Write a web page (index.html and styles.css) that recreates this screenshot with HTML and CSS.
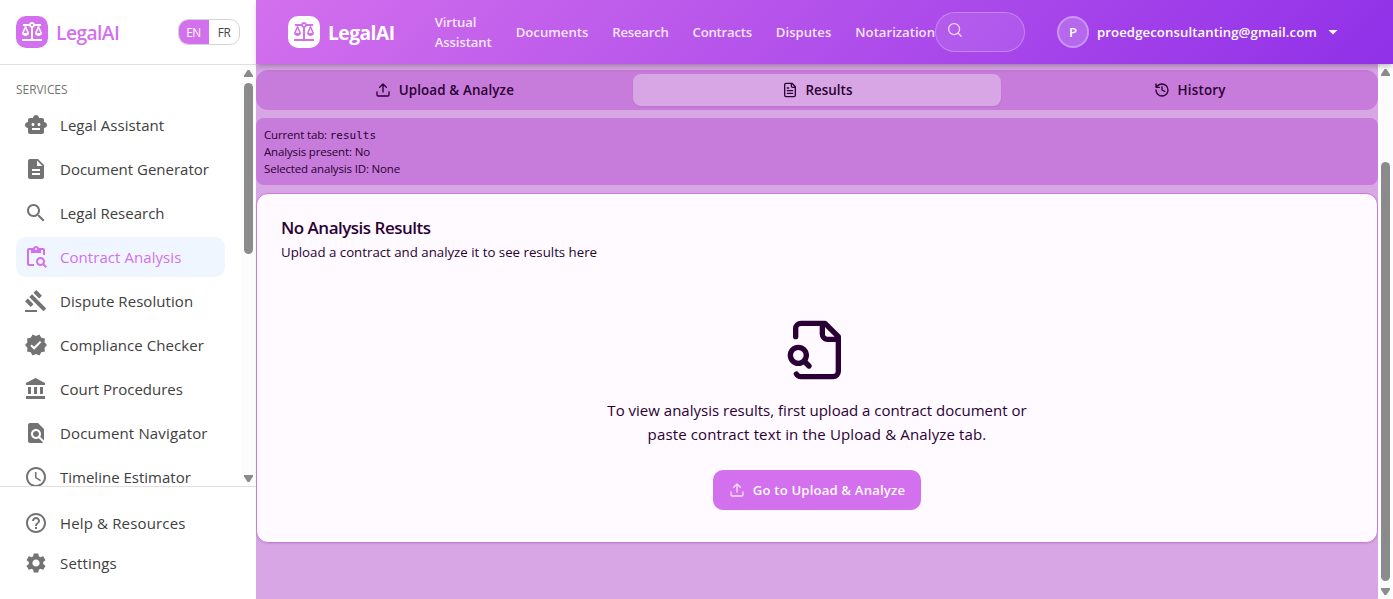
FILE: index.html
```
<!DOCTYPE html>
<html lang="en">
<head>
<meta charset="utf-8">
<title>LegalAI - Contract Analysis</title>
<link rel="stylesheet" href="styles.css">
</head>
<body>
<svg class="defs" width="0" height="0">
  <symbol id="balance" viewBox="0 0 24 24"><path d="M13 7.83c.85-.3 1.53-.98 1.83-1.83H18l-3 7c0 1.66 1.57 3 3.5 3s3.5-1.34 3.5-3l-3-7h2V4h-6.17c-.41-1.17-1.52-2-2.83-2s-2.42.83-2.83 2H3v2h2l-3 7c0 1.66 1.57 3 3.5 3S9 14.66 9 13L6 6h3.17c.3.85.98 1.53 1.83 1.83V19H2v2h20v-2h-9V7.83zM20.37 13h-3.74l1.87-4.36L20.37 13zm-13 0H3.63L5.5 8.64 7.37 13zM12 6c-.55 0-1-.45-1-1s.45-1 1-1 1 .45 1 1-.45 1-1 1z"/></symbol>
  <symbol id="upload" viewBox="0 0 24 24"><path d="M21 15v4a2 2 0 0 1-2 2H5a2 2 0 0 1-2-2v-4M17 8l-5-5-5 5M12 3v12"/></symbol>
</svg>
<div class="app">
  <aside class="sidebar">
    <div class="side-head">
      <span class="logo logo-purple"><svg class="ic24"><use href="#balance"/></svg></span>
      <span class="side-brand">LegalAI</span>
      <div class="lang"><span class="lang-on">EN</span><span class="lang-off">FR</span></div>
    </div>
    <div class="side-scroll">
      <nav class="side-list">
        <div class="side-title">SERVICES</div>
        <a class="item item-mid"><svg class="ic24" viewBox="0 0 24 24"><path d="M20 9V7c0-1.1-.9-2-2-2h-3c0-1.66-1.34-3-3-3S9 3.34 9 5H6c-1.1 0-2 .9-2 2v2c-1.66 0-3 1.34-3 3s1.34 3 3 3v4c0 1.1.9 2 2 2h12c1.1 0 2-.9 2-2v-4c1.66 0 3-1.34 3-3s-1.34-3-3-3zM7.5 11.5c0-.83.67-1.5 1.5-1.5s1.5.67 1.5 1.5S9.83 13 9 13s-1.5-.67-1.5-1.5zM16 17H8v-2h8v2zm-1-4c-.83 0-1.5-.67-1.5-1.5S14.17 10 15 10s1.5.67 1.5 1.5S15.83 13 15 13z"/></svg>Legal Assistant</a>
        <a class="item"><svg class="ic24" viewBox="0 0 24 24"><path d="M14 2H6c-1.1 0-1.99.9-1.99 2L4 20c0 1.1.89 2 1.99 2H18c1.1 0 2-.9 2-2V8l-6-6zm2 16H8v-2h8v2zm0-4H8v-2h8v2zm-3-5V3.5L18.5 9H13z"/></svg>Document Generator</a>
        <a class="item"><svg class="ic24" viewBox="0 0 24 24"><path d="M15.5 14h-.79l-.28-.27C15.41 12.59 16 11.11 16 9.5 16 5.91 13.09 3 9.5 3S3 5.91 3 9.5 5.91 16 9.5 16c1.61 0 3.09-.59 4.23-1.57l.27.28v.79l5 4.99L20.49 19l-4.99-5zm-6 0C7.01 14 5 11.99 5 9.5S7.01 5 9.5 5 14 7.01 14 9.5 11.99 14 9.5 14z"/></svg>Legal Research</a>
        <a class="item item-mid item-active"><svg class="ic24" viewBox="0 0 24 24"><path fill-rule="evenodd" d="M5 5h2v3h10V5h2v5h2V5c0-1.1-.9-2-2-2h-4.18C14.4 1.84 13.3 1 12 1s-2.4.84-2.82 2H5c-1.1 0-2 .9-2 2v14c0 1.1.9 2 2 2h5v-2H5V5zm7-2c.55 0 1 .45 1 1s-.45 1-1 1-1-.45-1-1 .45-1 1-1z"/><path d="M20.3 18.9c.4-.7.7-1.5.7-2.4 0-2.5-2-4.5-4.5-4.5S12 14 12 16.5s2 4.5 4.5 4.5c.9 0 1.7-.3 2.4-.7l2.7 2.7 1.4-1.4-2.7-2.7zm-3.8.1c-1.4 0-2.5-1.1-2.5-2.5s1.1-2.5 2.5-2.5 2.5 1.1 2.5 2.5-1.1 2.5-2.5 2.5z"/></svg>Contract Analysis</a>
        <a class="item item-mid"><svg class="ic24" viewBox="0 0 24 24"><path d="M1 21h12v2H1zM5.245 8.07l2.83-2.827 14.14 14.142-2.828 2.828zM12.317 1l5.657 5.656-2.83 2.83-5.654-5.66zM3.825 9.485l5.657 5.657-2.828 2.828-5.657-5.657z"/></svg>Dispute Resolution</a>
        <a class="item item-mid"><svg class="ic24" viewBox="0 0 24 24"><path d="M23 12l-2.44-2.79.34-3.69-3.61-.82-1.89-3.2L12 2.96 8.6 1.5 6.71 4.69 3.1 5.5l.34 3.7L1 12l2.44 2.79-.34 3.7 3.61.82L8.6 22.5l3.4-1.47 3.4 1.46 1.89-3.19 3.61-.82-.34-3.69L23 12zm-12.91 4.72l-3.8-3.81 1.48-1.48 2.32 2.33 5.85-5.87 1.48 1.48-7.33 7.35z"/></svg>Compliance Checker</a>
        <a class="item"><svg class="ic24" viewBox="0 0 24 24"><path d="M4 10v7h3v-7H4zm6 0v7h3v-7h-3zM2 22h19v-3H2v3zm14-12v7h3v-7h-3zm-4.5-9L2 6v2h19V6l-9.5-5z"/></svg>Court Procedures</a>
        <a class="item item-wide"><svg class="ic24" viewBox="0 0 24 24"><path d="M20 19.59V8l-6-6H6c-1.1 0-1.99.9-1.99 2L4 20c0 1.1.89 2 1.99 2H18c.45 0 .85-.15 1.19-.4l-4.43-4.43c-.8.52-1.74.83-2.76.83-2.76 0-5-2.24-5-5s2.24-5 5-5 5 2.24 5 5c0 1.02-.31 1.96-.83 2.75L20 19.59zM9 13c0 1.66 1.34 3 3 3s3-1.34 3-3-1.34-3-3-3-3 1.34-3 3z"/></svg>Document Navigator</a>
        <a class="item"><svg class="ic24" viewBox="0 0 24 24"><path d="M11.99 2C6.47 2 2 6.48 2 12s4.47 10 9.99 10C17.52 22 22 17.52 22 12S17.52 2 11.99 2zM12 20c-4.42 0-8-3.58-8-8s3.58-8 8-8 8 3.58 8 8-3.58 8-8 8zm.5-13H11v6l5.25 3.15.75-1.23-4.5-2.67z"/></svg>Timeline Estimator</a>
      </nav>
      <div class="bar side-bar"><i class="arrow up"></i><i class="thumb thumb-side"></i><i class="arrow down"></i></div>
    </div>
    <div class="side-foot">
      <a class="item item-wide"><svg class="ic24" viewBox="0 0 24 24"><path d="M11 18h2v-2h-2v2zm1-16C6.48 2 2 6.48 2 12s4.48 10 10 10 10-4.48 10-10S17.52 2 12 2zm0 18c-4.41 0-8-3.59-8-8s3.59-8 8-8 8 3.59 8 8-3.59 8-8 8zm0-14c-2.21 0-4 1.79-4 4h2c0-1.1.9-2 2-2s2 .9 2 2c0 2-3 1.75-3 5h2c0-2.25 3-2.5 3-5 0-2.21-1.79-4-4-4z"/></svg>Help &amp; Resources</a>
      <a class="item item-wide"><svg class="ic24" viewBox="0 0 24 24"><path d="M19.14 12.94c.04-.3.06-.61.06-.94 0-.32-.02-.64-.07-.94l2.03-1.58c.18-.14.23-.41.12-.61l-1.92-3.32c-.12-.22-.37-.29-.59-.22l-2.39.96c-.5-.38-1.03-.7-1.62-.94l-.36-2.54c-.04-.24-.24-.41-.48-.41h-3.84c-.24 0-.43.17-.47.41l-.36 2.54c-.59.24-1.13.57-1.62.94l-2.39-.96c-.22-.08-.47 0-.59.22L2.74 8.87c-.12.21-.08.47.12.61l2.03 1.58c-.05.3-.09.63-.09.94s.02.64.07.94l-2.03 1.58c-.18.14-.23.41-.12.61l1.92 3.32c.12.22.37.29.59.22l2.39-.96c.5.38 1.03.7 1.62.94l.36 2.54c.05.24.24.41.48.41h3.84c.24 0 .44-.17.47-.41l.36-2.54c.59-.24 1.13-.56 1.62-.94l2.39.96c.22.08.47 0 .59-.22l1.92-3.32c.12-.22.07-.47-.12-.61l-2.01-1.58zM12 15.6c-1.98 0-3.6-1.62-3.6-3.6s1.62-3.6 3.6-3.6 3.6 1.62 3.6 3.6-1.62 3.6-3.6 3.6z"/></svg>Settings</a>
    </div>
  </aside>

  <div class="page">
    <header class="top">
      <span class="logo logo-white"><svg class="ic24"><use href="#balance"/></svg></span>
      <span class="top-brand">LegalAI</span>
      <nav class="top-nav">
        <a class="snug">Virtual<br>Assistant</a><a>Documents</a><a class="tight">Research</a><a class="tight">Contracts</a><a>Disputes</a><a>Notarization</a>
      </nav>
      <div class="search"><svg class="line ic16" viewBox="0 0 24 24"><circle cx="11" cy="11" r="8.5"/><path d="m22 22-4.6-4.6"/></svg></div>
      <div class="user"><span class="avatar">P</span><span class="email">proedgeconsultanting@gmail.com</span><i class="caret"></i></div>
    </header>
    <div class="body">
      <main class="content">
        <div class="tabs">
          <div class="tab tab-first"><svg class="line ic16"><use href="#upload"/></svg>Upload &amp; Analyze</div>
          <div class="tab tab-active"><svg class="line ic16" viewBox="0 0 24 24"><path d="M15 2H6a2 2 0 0 0-2 2v16a2 2 0 0 0 2 2h12a2 2 0 0 0 2-2V7ZM14 2v4a2 2 0 0 0 2 2h4M10 9H8M16 13H8M16 17H8"/></svg>Results</div>
          <div class="tab tab-last"><svg class="line ic16" viewBox="0 0 24 24"><path d="M3 12a9 9 0 1 0 9-9 9.75 9.75 0 0 0-6.74 2.74L3 8M3 3v5h5M12 7v5l4 2"/></svg>History</div>
        </div>
        <div class="debug">
          <div>Current tab: <code>results</code></div>
          <div>Analysis present: No</div>
          <div>Selected analysis ID: None</div>
        </div>
        <section class="card">
          <h2>No Analysis Results</h2>
          <p class="sub">Upload a contract and analyze it to see results here</p>
          <div class="empty">
            <svg class="line ic64" viewBox="0 0 24 24"><path d="M14 2v4a2 2 0 0 0 2 2h4M4.268 21a2 2 0 0 0 1.727 1H18a2 2 0 0 0 2-2V7l-5-5H6a2 2 0 0 0-2 2v3M9 18l-1.5-1.5"/><circle cx="5" cy="14" r="3"/></svg>
            <p class="hint">To view analysis results, first upload a contract document or<br><span class="hint-2">paste contract text in the Upload &amp; Analyze tab.</span></p>
            <button class="cta"><svg class="line ic16"><use href="#upload"/></svg>Go to Upload &amp; Analyze</button>
          </div>
        </section>
      </main>
      <div class="bar main-bar"><i class="arrow up"></i><i class="thumb thumb-main"></i><i class="arrow down"></i></div>
    </div>
  </div>
</div>
</body>
</html>
```
FILE: styles.css
```
* { box-sizing: border-box; }
body { margin: 0; font-family: "Open Sans", "Noto Sans", sans-serif; background: #fff; overflow: hidden; }
h2, p { margin: 0; }
.defs { position: absolute; }
.app { display: flex; width: 100%; height: 599px; }
svg { flex: none; display: block; fill: currentColor; }
.ic24 { width: 24px; height: 24px; }
.ic16 { width: 16px; height: 16px; }
.ic64 { width: 64px; height: 64px; }
.line { fill: none; stroke: currentColor; stroke-width: 2; stroke-linecap: round; stroke-linejoin: round; }

.sidebar { width: 256px; flex: none; display: flex; flex-direction: column; background: #fff; }
.side-head { height: 65px; flex: none; display: flex; align-items: center; padding: 0 16px; border-bottom: 1px solid #e0e0e0; }
.logo { width: 32px; height: 32px; flex: none; border-radius: 10px; display: flex; align-items: center; justify-content: center; }
.logo-purple { background: #d370ed; color: #fff; }
.logo-white { background: #fff; color: #d370ed; }
.side-brand { margin-left: 8px; font-size: 19.2px; font-weight: 600; letter-spacing: -.55px; color: #d370ed; }
.lang { margin-left: auto; display: flex; width: 62px; height: 26px; border: 1px solid #d4d4d4; border-radius: 10px; overflow: hidden; font-size: 11.8px; line-height: 25px; text-align: center; letter-spacing: -.4px; }
.lang-on { width: 31px; margin: -1px 0 -1px -1px; padding-top: 1px; background: #d370ed; color: #fff; }
.lang-off { flex: 1; color: #444; }

.side-scroll { flex: 1; min-height: 0; display: flex; }
.side-list { flex: 1; padding: 16px 16px 0; overflow: hidden; display: flex; flex-direction: column; gap: 4px; }
.side-title { height: 16px; margin-bottom: 4px; font-size: 11.9px; font-weight: 500; line-height: 17px; color: #737373; }
.item { height: 40px; flex: none; display: flex; align-items: center; gap: 12px; padding: 0 8px; border-radius: 10px; font-size: 15px; color: #404040; white-space: nowrap; }
.item svg { color: #737373; }
.item-mid { letter-spacing: .06px; }
.item-wide { letter-spacing: .15px; }
.item-active { background: #eff6ff; color: #d370ed; }
.item-active svg { color: #d370ed; }
.side-foot { height: 113px; flex: none; border-top: 1px solid #e0e0e0; padding: 16px; }

.bar { width: 15px; flex: none; background: #fcfcfc; display: flex; flex-direction: column; align-items: center; padding: 5px 0 4px; }
.arrow { width: 9px; height: 7px; background: #8b8b8b; flex: none; }
.up { clip-path: polygon(40% 0, 60% 0, 100% 80%, 100% 100%, 0 100%, 0 80%); }
.down { margin-top: auto; clip-path: polygon(0 0, 100% 0, 100% 20%, 60% 100%, 40% 100%, 0 20%); }
.thumb { width: 9px; border-radius: 5px; background: #8b8b8b; flex: none; }
.thumb-side { height: 171px; margin-top: 6px; }
.thumb-main { height: 419px; margin-top: 86px; }

.page { flex: 1; min-width: 0; display: flex; flex-direction: column; }
.top { height: 64px; flex: none; z-index: 1; display: flex; align-items: center; padding-left: 32px; color: #fff; background: linear-gradient(135deg, #d370ed, #9030e8); box-shadow: 0 4px 6px -1px rgba(0,0,0,.18), 0 2px 4px -2px rgba(0,0,0,.15); }
.top-brand { width: 67px; margin: 0 39.7px 0 8px; font-size: 19.2px; font-weight: 700; letter-spacing: -.5px; }
.top-nav { display: flex; align-items: center; gap: 24px; width: 500.3px; font-size: 13.16px; font-weight: 600; line-height: 20px; color: rgba(255,255,255,.87); white-space: nowrap; }
.tight { letter-spacing: -.24px; }
.snug { letter-spacing: -.11px; }
.search { width: 90px; height: 40px; flex: none; border: 1px solid rgba(255,255,255,.25); border-radius: 20px; background: rgba(255,255,255,.1); padding: 9px 11px; color: rgba(255,255,255,.75); }
.search svg { width: 15.5px; height: 15.5px; }
.user { display: flex; align-items: center; margin-left: 32px; font-weight: 600; font-size: 13.16px; }
.avatar { width: 32px; height: 32px; border-radius: 50%; border: 2px solid rgba(255,255,255,.3); background: rgba(255,255,255,.2); text-align: center; line-height: 28px; }
.email { margin-left: 8px; width: 231px; letter-spacing: .1px; }
.caret { width: 10px; height: 5px; background: #fff; clip-path: polygon(0 0, 100% 0, 50% 100%); }

.body { flex: 1; min-height: 0; display: flex; }
.content { flex: 1; min-width: 0; padding-top: 6px; background: #d8a6e5; color: #2a0134; display: flex; flex-direction: column; gap: 8px; }
.tabs { height: 40px; display: grid; grid-template-columns: repeat(3, 1fr); gap: 4px; padding: 4px; border-radius: 12px; background: #c77bda; }
.tab { display: flex; align-items: center; justify-content: center; gap: 8px; border-radius: 8px; font-size: 13.4px; font-weight: 550; }
.tab-first { letter-spacing: .13px; }
.tab-active { background: #d8a6e5; box-shadow: 0 1px 2px rgba(0,0,0,.06); }
.tab-last { letter-spacing: .2px; }
.debug { height: 67px; padding: 8px; border-radius: 8px; background: #c77bda; font-size: 11.5px; line-height: 17px; letter-spacing: -.16px; }
.debug code { font-family: "DejaVu Sans Mono", monospace; font-size: 11px; line-height: 1; letter-spacing: 0; }
.card { height: 350px; border: 1px solid #c77bda; border-radius: 12px; background: #fffaff; padding: 24px; box-shadow: 0 1px 2px rgba(0,0,0,.1); }
.card h2 { font-size: 17px; font-weight: 600; line-height: 20px; letter-spacing: -.5px; }
.sub { margin-top: 4px; font-size: 13.25px; line-height: 20px; }
.empty { display: flex; flex-direction: column; align-items: center; padding-top: 56px; }
.hint { margin-top: 16px; font-size: 15.02px; line-height: 24px; text-align: center; }
.hint-2 { letter-spacing: .13px; }
.cta { margin-top: 24px; width: 208px; height: 40px; border: 0; border-radius: 10px; background: #d370ed; color: #fffaff; display: flex; align-items: center; justify-content: center; gap: 8px; padding: 0; font: 600 13.16px "Open Sans", sans-serif; letter-spacing: .15px; white-space: nowrap; }
.cta svg { opacity: .8; }
```
